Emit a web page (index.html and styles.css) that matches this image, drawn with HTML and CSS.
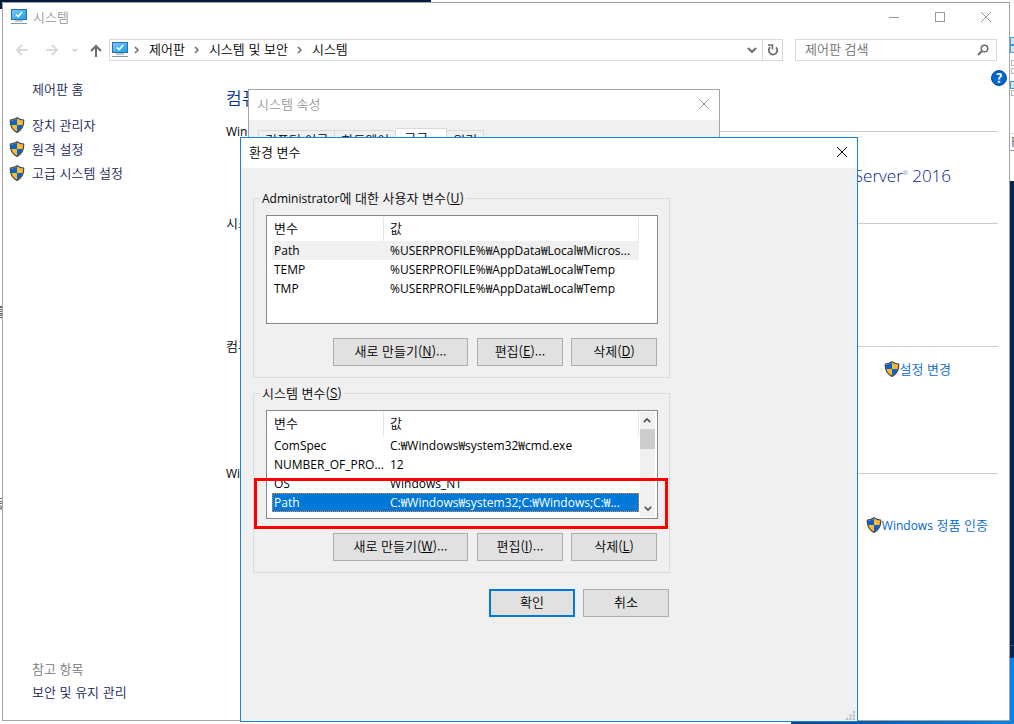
FILE: index.html
```html
<!DOCTYPE html>
<html lang="ko">
<head>
    <meta charset="UTF-8">
    <meta name="viewport" content="width=device-width, initial-scale=1.0">
    <title>시스템</title>
    <link rel="stylesheet" href="styles.css">
</head>
<body>
    <svg class="defs" aria-hidden="true">
        <defs>
            <linearGradient id="screen" x1="0" y1="0" x2="1" y2="1">
                <stop offset="0" stop-color="#7cc8fb"/>
                <stop offset="1" stop-color="#18a0f5"/>
            </linearGradient>
            <clipPath id="shieldClip">
                <path d="M8 1.5C6 3 4 3.6 1.8 3.6C1.5 8 2.5 12 8 15C13.500 12 14.500 8 14.200 3.600C12 3.600 10 3 8 1.500Z"/>
            </clipPath>
        </defs>
        <symbol id="pc" viewBox="0 0 16 16">
            <rect x="0.500" y="0.500" width="15" height="10" fill="url(#screen)" stroke="#2a6f9e"/>
            <path d="M5 5.500L7.200 7.600L11.200 3" fill="none" stroke="#fff" stroke-width="1.600"/>
            <path d="M4 12h8" stroke="#7f93a8" stroke-width="1"/>
            <path d="M0 14.500h16" stroke="#8398ad" stroke-width="1"/>
        </symbol>
        <symbol id="shield" viewBox="0 0 16 16">
            <g clip-path="url(#shieldClip)">
                <rect width="8" height="8" fill="#0a63c9"/>
                <rect x="8" width="8" height="8" fill="#ffb92e"/>
                <rect y="8" width="8" height="8" fill="#ffb92e"/>
                <rect x="8" y="8" width="8" height="8" fill="#0a63c9"/>
            </g>
            <path d="M8 0.800C6 2.600 4 3.100 1.400 3.100C1 8 2.200 12.400 8 15.400C13.800 12.400 15 8 14.600 3.100C12 3.100 10 2.600 8 0.800Z" fill="none" stroke="#4b4b4b" stroke-width="1.300"/>
        </symbol>
        <symbol id="close" viewBox="0 0 12 12">
            <path d="M1 1L11 11M11 1L1 11" fill="none" stroke="currentColor"/>
        </symbol>
        <symbol id="sep" viewBox="0 0 6 8">
            <path d="M1 1L4 4L1 7" fill="none" stroke="#6d6d6d" stroke-width="1.500"/>
        </symbol>
        <symbol id="down" viewBox="0 0 10 6">
            <path d="M1 1L5 5L9 1" fill="none" stroke="currentColor" stroke-width="2"/>
        </symbol>
    </svg>

    <div class="desktop">
        <!-- windows and wallpaper that show behind the control panel -->
        <div class="wall-top"></div>
        <div class="wall-right">
            <span class="tick blue tick-1"></span>
            <span class="tick blue tick-2"></span>
            <span class="tick tick-3"></span>
            <span class="tick tick-4"></span>
            <span class="tick blue tick-5"></span>
            <span class="tick tick-6"></span>
            <span class="field-edge">F</span>
        </div>
        <div class="wall-bottom"></div>
        <span class="behind behind-1">를</span>
        <span class="behind behind-2">증</span>

        <div class="window system">
            <header class="titlebar">
                <svg class="icon"><use href="#pc"/></svg>
                <span class="title">시스템</span>
                <button type="button" class="caption" aria-label="최소화"><svg class="glyph" viewBox="0 0 12 12"><path d="M1 6.500h10" stroke="currentColor"/></svg></button>
                <button type="button" class="caption" aria-label="최대화"><svg class="glyph" viewBox="0 0 12 12"><rect x="1.500" y="1.500" width="9" height="9" fill="none" stroke="currentColor"/></svg></button>
                <button type="button" class="caption" aria-label="닫기"><svg class="glyph"><use href="#close"/></svg></button>
            </header>

            <nav class="toolbar">
                <button type="button" class="nav" aria-label="뒤로"><svg width="14" height="12" viewBox="0 0 14 12"><path d="M13 6H2M7 1L2 6L7 11" fill="none" stroke="#d9d9d9" stroke-width="2"/></svg></button>
                <button type="button" class="nav" aria-label="앞으로"><svg width="14" height="12" viewBox="0 0 14 12"><path d="M1 6H12M7 1L12 6L7 11" fill="none" stroke="#d9d9d9" stroke-width="2"/></svg></button>
                <button type="button" class="nav recent" aria-label="최근 위치"><svg width="6" height="4" viewBox="0 0 10 6"><use href="#down"/></svg></button>
                <button type="button" class="nav up" aria-label="위로"><svg width="12" height="13" viewBox="0 0 12 13"><path d="M6 13V2M1 7L6 2L11 7" fill="none" stroke="#6d6d6d" stroke-width="2"/></svg></button>
                <div class="address">
                    <svg class="icon"><use href="#pc"/></svg>
                    <svg class="sep"><use href="#sep"/></svg>
                    <a href="#">제어판</a>
                    <svg class="sep"><use href="#sep"/></svg>
                    <a href="#">시스템 및 보안</a>
                    <svg class="sep"><use href="#sep"/></svg>
                    <a href="#">시스템</a>
                    <button type="button" class="history" aria-label="이전 위치"><svg width="10" height="6"><use href="#down"/></svg></button>
                    <button type="button" class="refresh" aria-label="새로 고침"><svg width="12" height="12" viewBox="0 0 12 12"><path d="M3.200 3.200A4.200 4.200 0 1 0 9 3.400" fill="none" stroke="#6d6d6d" stroke-width="1.800"/><path d="M1 1H5.500V5.500" fill="none" stroke="#6d6d6d" stroke-width="1.600"/></svg></button>
                </div>
                <div class="search">
                    <input type="text" placeholder="제어판 검색" aria-label="제어판 검색">
                    <svg width="12" height="12" viewBox="0 0 12 12"><circle cx="7.500" cy="4.500" r="3.300" fill="none" stroke="#6d6d6d" stroke-width="1.500"/><path d="M5 7L1 11" stroke="#6d6d6d" stroke-width="2"/></svg>
                </div>
            </nav>

            <div class="content">
                <aside class="sidebar">
                    <a href="#" class="home">제어판 홈</a>
                    <a href="#" class="task"><svg class="icon"><use href="#shield"/></svg>장치 관리자</a>
                    <a href="#" class="task"><svg class="icon"><use href="#shield"/></svg>원격 설정</a>
                    <a href="#" class="task"><svg class="icon"><use href="#shield"/></svg>고급 시스템 설정</a>
                    <div class="see-also">
                        <span class="muted">참고 항목</span>
                        <a href="#">보안 및 유지 관리</a>
                    </div>
                </aside>

                <main class="main">
                    <div class="main-head">
                        <h1>컴퓨터에 대한 기본 정보 보기</h1>
                        <button type="button" class="help" aria-label="도움말">?</button>
                    </div>
                    <section>
                        <h2><span><span class="latin">Windows</span> 버전</span></h2>
                        <p class="brand">Windows Server<sup>®</sup> 2016</p>
                    </section>
                    <section>
                        <h2>시스템</h2>
                    </section>
                    <section>
                        <h2>컴퓨터 이름</h2>
                        <a href="#" class="action"><svg class="icon"><use href="#shield"/></svg>설정 변경</a>
                    </section>
                    <section>
                        <h2><span><span class="latin">Windows</span> 정품 인증</span></h2>
                        <a href="#" class="action activate"><svg class="icon"><use href="#shield"/></svg><span><span class="latin">Windows</span> 정품 인증</span></a>
                    </section>
                </main>
            </div>
        </div>

        <div class="window properties">
            <header class="titlebar">
                <span class="title">시스템 속성</span>
                <button type="button" class="caption" aria-label="닫기"><svg class="glyph"><use href="#close"/></svg></button>
            </header>
            <div class="tabs">
                <button type="button" class="tab">컴퓨터 이름</button>
                <button type="button" class="tab">하드웨어</button>
                <button type="button" class="tab active">고급</button>
                <button type="button" class="tab">원격</button>
            </div>
        </div>

        <div class="window env">
            <header class="titlebar">
                <span class="title">환경 변수</span>
                <button type="button" class="caption" aria-label="닫기"><svg class="glyph"><use href="#close"/></svg></button>
            </header>
            <form class="variables">
                <fieldset>
                    <legend><span class="latin">Administrator</span>에 대한 사용자 변수(<u>U</u>)</legend>
                    <div class="list">
                        <table>
                            <thead>
                                <tr><th class="name">변수</th><th>값</th></tr>
                            </thead>
                            <tbody>
                                <tr class="inactive"><td>Path</td><td>%USERPROFILE%₩AppData₩Local₩Micros...</td></tr>
                                <tr><td>TEMP</td><td>%USERPROFILE%₩AppData₩Local₩Temp</td></tr>
                                <tr><td>TMP</td><td>%USERPROFILE%₩AppData₩Local₩Temp</td></tr>
                            </tbody>
                        </table>
                    </div>
                    <div class="buttons">
                        <button type="button" class="btn wide">새로 만들기(<u>N</u>)...</button>
                        <button type="button" class="btn">편집(<u>E</u>)...</button>
                        <button type="button" class="btn">삭제(<u>D</u>)</button>
                    </div>
                </fieldset>
                <fieldset>
                    <legend>시스템 변수(<u>S</u>)</legend>
                    <div class="list">
                        <table>
                            <thead>
                                <tr><th class="name">변수</th><th>값</th></tr>
                            </thead>
                            <tbody>
                                <tr><td>ComSpec</td><td>C:₩Windows₩system32₩cmd.exe</td></tr>
                                <tr><td>NUMBER_OF_PRO...</td><td>12</td></tr>
                                <tr><td>OS</td><td>Windows_NT</td></tr>
                                <tr class="selected"><td>Path</td><td>C:₩Windows₩system32;C:₩Windows;C:₩...</td></tr>
                            </tbody>
                        </table>
                        <div class="scrollbar">
                            <button type="button" class="arrow flip" aria-label="위로 스크롤"><svg width="8" height="5" viewBox="0 0 10 6"><use href="#down"/></svg></button>
                            <div class="thumb"></div>
                            <button type="button" class="arrow" aria-label="아래로 스크롤"><svg width="8" height="5" viewBox="0 0 10 6"><use href="#down"/></svg></button>
                        </div>
                    </div>
                    <div class="buttons">
                        <button type="button" class="btn wide">새로 만들기(<u>W</u>)...</button>
                        <button type="button" class="btn">편집(<u>I</u>)...</button>
                        <button type="button" class="btn">삭제(<u>L</u>)</button>
                    </div>
                    <div class="highlight"></div>
                </fieldset>
                <div class="buttons confirm">
                    <button type="submit" class="btn default">확인</button>
                    <button type="button" class="btn">취소</button>
                </div>
            </form>
            <svg class="grip" viewBox="0 0 8 8"><path d="M6 0h2v2h-2zM3 3h2v2h-2zM6 3h2v2h-2zM0 6h2v2h-2zM3 6h2v2h-2zM6 6h2v2h-2z" fill="#bfbfbf"/></svg>
        </div>
    </div>
</body>
</html>
```

FILE: styles.css
```css
* {
    box-sizing: border-box;
}
body {
    margin: 0;
    font-family: "Noto Sans CJK KR", sans-serif;
    font-size: 13px;
    font-weight: 350;
    line-height: 16px;
    color: #000;
}
button, input {
    font: inherit;
    color: inherit;
    padding: 0;
    border: none;
    background: none;
}
button {
    display: flex;
    align-items: center;
    justify-content: center;
}
a {
    color: inherit;
    text-decoration: none;
}
h1, h2, p {
    margin: 0;
    font-weight: 350;
}
svg {
    flex: none;
}
.latin {
    font-family: "Open Sans", sans-serif;
    font-size: 12px;
    font-weight: 400;
    line-height: 14px;
}
.defs {
    position: absolute;
    width: 0;
    height: 0;
}
.icon {
    width: 16px;
    height: 16px;
}
.glyph {
    width: 12px;
    height: 12px;
}

/* desktop */
.desktop {
    position: relative;
    height: 100vh;
    overflow: hidden;
    background-color: #fff;
}
.wall-top {
    position: absolute;
    top: 0;
    left: 0;
    width: 431px;
    height: 9px;
    background-color: #001a40;
}
.wall-right {
    position: absolute;
    top: 0;
    right: 0;
    bottom: 0;
    width: 4px;
    background: linear-gradient(#fff 181px, #00245a 181px, #00245a 645px, #2c4a7a 645px, #2c4a7a 646px, #00245a 646px, #00245a 658px, #0a84e8 658px);
}
.wall-bottom {
    position: absolute;
    left: 791px;
    right: 0;
    bottom: 0;
    height: 4px;
    background: linear-gradient(90deg, #00478c, #0a84e8);
}
.tick {
    position: absolute;
    left: 1px;
    width: 8px;
    height: 6px;
    border: 1px solid #b4b4b4;
}
.tick.blue {
    left: 0;
    height: 8px;
    border-color: #3c9be8;
    background-color: #cce8ff;
}
.tick-1 { top: 37px; }
.tick-2 { top: 45px; }
.tick-3 { top: 60px; }
.tick-4 { top: 68px; }
.tick-5 { top: 81px; }
.tick-6 { top: 90px; }
.field-edge {
    position: absolute;
    top: 133px;
    left: 0;
    width: 20px;
    height: 18px;
    padding-left: 1px;
    border-top: 1px solid #d9d9d9;
    border-bottom: 1px solid #a0a0a0;
    color: #666;
}
.behind {
    position: absolute;
    left: -8px;
    color: #444;
}
.behind-1 { top: 303px; }
.behind-2 { top: 495px; }

/* windows */
.window {
    position: absolute;
    display: flex;
    flex-direction: column;
    border: 1px solid #a3a3a3;
    background-color: #fff;
}
.titlebar {
    display: flex;
    align-items: center;
    height: 30px;
    flex: none;
    padding: 0 0 2px 8px;
    color: #999;
    background-color: #fff;
}
.titlebar .title {
    flex: 1;
}
.caption {
    width: 46px;
    height: 28px;
}
.system {
    top: 2px;
    left: 2px;
    right: 4px;
    bottom: 3px;
}
.system .title {
    margin-left: 6px;
}
.properties {
    top: 89px;
    left: 248px;
    width: 472px;
    height: 120px;
    background-color: #f0f0f0;
}
.properties .caption, .env .caption {
    width: 30px;
}

/* toolbar */
.toolbar {
    display: flex;
    height: 37px;
    flex: none;
    padding: 6px 12px 9px 4px;
}
.nav {
    width: 30px;
}
.nav.recent {
    width: 16px;
    color: #c4c4c4;
}
.nav.up {
    width: 26px;
}
.address {
    flex: 1;
    display: flex;
    align-items: center;
    gap: 9px;
    padding-left: 2px;
    margin-right: 12px;
    border: 1px solid #d9d9d9;
}
.address a {
    padding-bottom: 2px;
}
.address .icon {
    margin-right: -3px;
}
.sep {
    width: 6px;
    height: 8px;
}
.history {
    width: 20px;
    margin-left: auto;
    margin-right: -9px;
    color: #6d6d6d;
}
.refresh {
    width: 20px;
    align-self: stretch;
    border-left: 1px solid #d9d9d9;
}
.search {
    display: flex;
    align-items: center;
    width: 202px;
    padding: 0 7px 0 9px;
    border: 1px solid #d9d9d9;
}
.search input {
    flex: 1;
    min-width: 0;
    padding-bottom: 2px;
    outline: none;
}
.search input::placeholder {
    color: #6d6d6d;
}

/* control panel content */
.content {
    flex: 1;
    display: flex;
    min-height: 0;
}
.sidebar {
    display: flex;
    flex-direction: column;
    gap: 8px;
    width: 223px;
    padding: 11px 0 20px 6px;
    color: #151c55;
}
.home {
    padding-left: 23px;
    margin-bottom: 12px;
}
.task {
    display: flex;
    gap: 7px;
}
.see-also {
    display: flex;
    flex-direction: column;
    gap: 7px;
    margin-top: auto;
    padding-left: 23px;
}
.muted {
    color: #777;
}
.main {
    flex: 1;
    display: grid;
    grid-template-rows: 53px 92px 123px 127px 1fr;
    padding-right: 11px;
}
.main-head {
    display: flex;
    align-items: flex-start;
    justify-content: space-between;
}
h1 {
    margin-top: 16px;
    font-size: 17px;
    line-height: 24px;
    color: #003399;
}
.help {
    width: 16px;
    height: 16px;
    margin-right: -9px;
    border-radius: 50%;
    border: 1px solid #0a4a94;
    background-color: #0067d0;
    color: #fff;
    font-weight: bold;
}
section {
    display: flex;
    flex-direction: column;
    align-items: flex-end;
}
h2 {
    display: flex;
    align-items: center;
    gap: 8px;
    align-self: stretch;
    height: 16px;
    font-size: 13px;
    line-height: 14px;
}
h2::after {
    content: "";
    flex: 1;
    border-top: 1px solid #ccc;
}
.brand {
    margin: 25px 47px 0 0;
    font-family: "Open Sans", sans-serif;
    font-size: 17px;
    line-height: 24px;
    color: #00188f;
}
.brand sup {
    font-size: 6px;
    line-height: 6px;
}
.action {
    display: flex;
    margin: 7px 47px 0 0;
    color: #0066cc;
}
.action.activate {
    margin: 36px 10px 0 0;
}

/* system properties */
.tabs {
    display: flex;
    padding: 8px 9px 0;
}
.tab {
    height: 22px;
    margin-top: 2px;
    padding: 0 6px 2px;
    border: 1px solid #d9d9d9;
    border-left: none;
}
.tab:first-child {
    border-left: 1px solid #d9d9d9;
}
.tab.active {
    height: 24px;
    margin-top: 0;
    padding: 0 18px 4px 8px;
    background-color: #fff;
}

/* environment variables */
.env {
    top: 137px;
    left: 240px;
    width: 618px;
    height: 585px;
    border-color: #1883d7;
    background-color: #f0f0f0;
}
.env .titlebar {
    color: #000;
}
.variables {
    width: 441px;
    padding: 22px 12px;
}
fieldset {
    position: relative;
    min-width: 0;
    margin: 0 0 7px;
    padding: 9px 11px 11px 12px;
    border: 1px solid #dcdcdc;
}
legend {
    height: 16px;
    margin-left: -6px;
    padding: 0 2px;
}
.list {
    display: flex;
    align-items: flex-start;
    height: 109px;
    padding: 1px 0 1px 5px;
    border: 1px solid #828790;
    background-color: #fff;
    overflow: hidden;
}
table {
    width: 367px;
    table-layout: fixed;
    border-collapse: separate;
    border-spacing: 0;
}
th, td {
    padding: 0 0 0 6px;
    text-align: left;
    font-weight: 350;
    white-space: nowrap;
    overflow: hidden;
}
th {
    height: 24px;
    padding-bottom: 2px;
    border-right: 1px solid #e5e5e5;
}
td {
    height: 19px;
    font-family: "Open Sans", "Noto Sans CJK KR", sans-serif;
    font-size: 12px;
    font-weight: 400;
    line-height: 19px;
}
th.name {
    width: 112px;
}
th:first-child, td:first-child {
    padding-left: 2px;
}
.inactive {
    background-color: #f0f0f0;
}
.selected {
    background-color: #0078d7;
    color: #fff;
    outline: 1px dotted #ff8728;
    outline-offset: -1px;
}
.scrollbar {
    display: flex;
    flex-direction: column;
    align-self: stretch;
    width: 15px;
    margin-left: 1px;
    background-color: #f0f0f0;
    color: #505050;
}
.arrow {
    height: 17px;
}
.arrow.flip {
    transform: rotate(180deg);
}
.thumb {
    flex: 1;
    max-height: 20px;
    margin-bottom: auto;
    background-color: #cdcdcd;
}
.buttons {
    display: flex;
    justify-content: flex-end;
    gap: 8px;
    margin: 14px 1px 0 0;
}
.btn {
    display: block;
    width: 86px;
    height: 28px;
    padding-bottom: 2px;
    border: 1px solid #adadad;
    background-color: #e1e1e1;
}
.btn.wide {
    width: 135px;
    margin-right: 1px;
}
.btn.default {
    border: 2px solid #0078d7;
}
.confirm {
    margin-top: 16px;
}
.highlight {
    position: absolute;
    left: 0;
    right: 1px;
    bottom: 43px;
    height: 51px;
    border: 3px solid #f00;
    pointer-events: none;
}
.grip {
    position: absolute;
    right: 2px;
    bottom: 1px;
    width: 9px;
    height: 9px;
}
```
